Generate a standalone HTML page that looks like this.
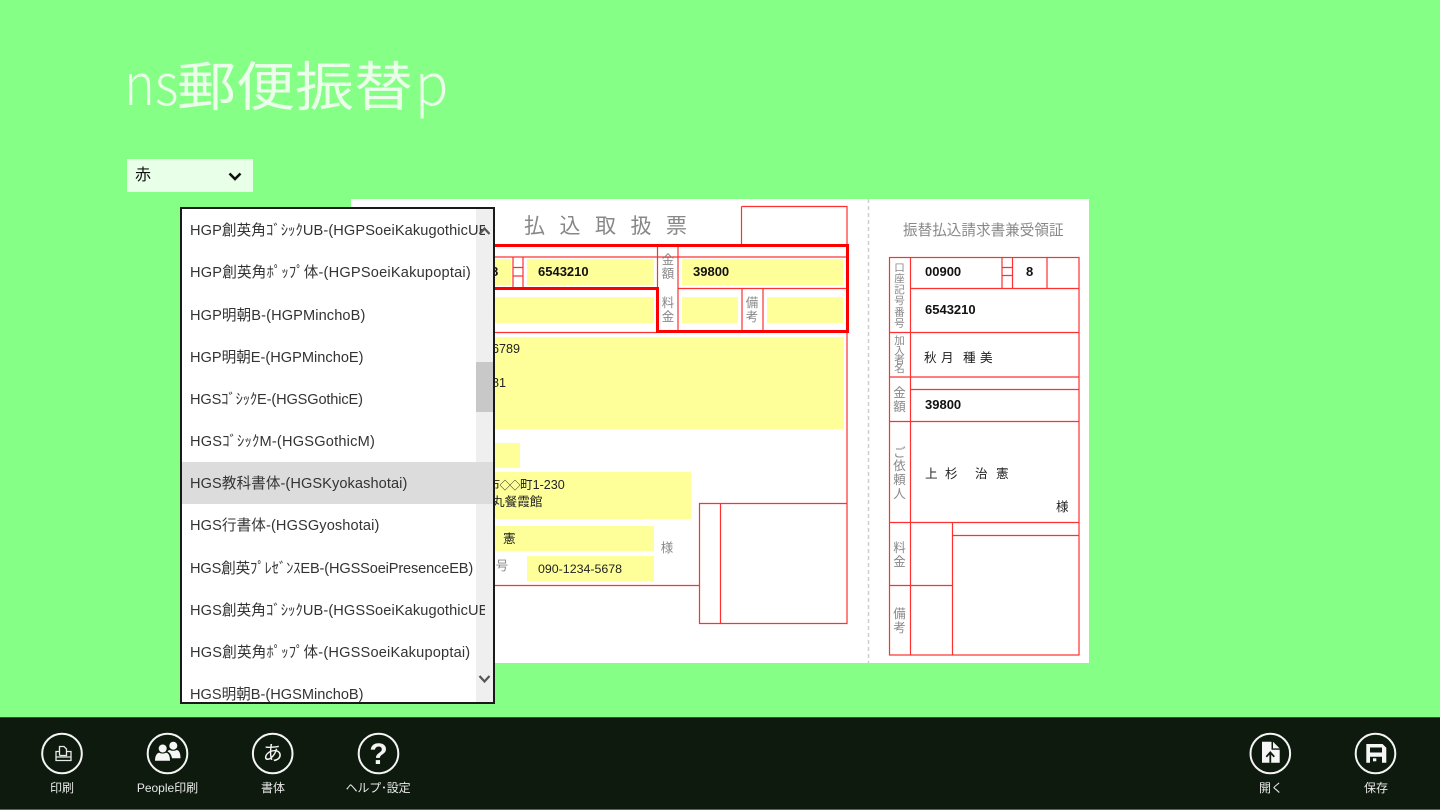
<!DOCTYPE html>
<html lang="ja"><head><meta charset="utf-8"><title>ns郵便振替p</title>
<style>
*{box-sizing:border-box;margin:0;padding:0}
html,body{width:1440px;height:810px;overflow:hidden;background:#85ff85;font-family:"Liberation Sans","Noto Sans CJK JP",sans-serif}
.abs{position:absolute}
#title{left:0;top:0;width:600px;height:140px;color:#eafeea;white-space:nowrap;font-family:"Noto Sans CJK JP",sans-serif}
#title span{position:absolute;line-height:80px}
#sel{left:127px;top:159px;width:126px;height:33px;background:#e8ffe8;color:#111;font-size:16px;line-height:33px;padding-left:8px}
#paper{left:351px;top:199px;width:738px;height:464px;background:#fff}
#drop{left:180px;top:207px;width:315px;height:497px;background:#fff;border:2px solid #1a1a1a;overflow:hidden}
#drop .sb{position:absolute;left:294px;top:0;width:17px;height:493px;background:#efefef}
#drop .th{position:absolute;left:294px;top:153px;width:17px;height:50px;background:#c8c8c8}
#drop .sel{position:absolute;left:0;top:253px;width:311px;height:42px;background:#dcdcdc}
#drop .it{position:absolute;left:8px;width:295px;overflow:hidden;height:24px;line-height:24px;font-size:14.6px;color:#333;white-space:nowrap}
#bar{left:0;top:717px;width:1440px;height:93px;background:#0e1a0e;border-top:1px solid #2e5a2e;border-bottom:1px solid #5a625a}
.lab{position:absolute;top:779px;width:120px;text-align:center;color:#e8e8e8;font-size:12px;line-height:18px;white-space:nowrap}
</style></head><body>
<div class="abs" id="title">
<span style="left:124px;top:40px;font-size:58px;font-weight:300;transform:scaleX(.9);transform-origin:0 50%">ns</span>
<span style="left:177px;top:43px;font-size:59px;font-weight:400;transform:scaleY(.9);transform-origin:0 50%">郵便振替</span>
<span style="left:415px;top:40px;font-size:58px;font-weight:300;transform:scaleX(.95);transform-origin:0 50%">p</span>
</div>
<div class="abs" id="sel">赤<svg style="position:absolute;left:101px;top:13px" width="14" height="10" viewBox="0 0 14 10"><path d="M1.500 1.500 7 7l5.500-5.500" fill="none" stroke="#111" stroke-width="2.600"/></svg></div>
<div class="abs" id="paper"></div>

<svg class="abs" style="left:0;top:0" width="1440" height="810" viewBox="0 0 1440 810" font-family="'Liberation Sans','Noto Sans CJK JP',sans-serif">
<g fill="#ffff99">
<rect x="490" y="259" width="21" height="26"/><rect x="527" y="259" width="127" height="26"/><rect x="682" y="259" width="161" height="26"/>
<rect x="490" y="297" width="164" height="26"/><rect x="682" y="297" width="56" height="26"/><rect x="767" y="297" width="76" height="26"/>
<rect x="490" y="337" width="354" height="92"/><rect x="490" y="443" width="30" height="25"/><rect x="490" y="472" width="201" height="47"/>
<rect x="490" y="526" width="164" height="25"/><rect x="527" y="556" width="127" height="25"/>
</g>
<g fill="none" stroke="#ff3030" stroke-width="1.200">
<path d="M741.500 206.500H847V244M741.500 206.500V245"/>
<path d="M490 257H846M490 332.500H657M847 332V503M513 257V288M523 257V288M513 267.500H523M513 276H523M678 245V332M657.500 245V288M742 289V331M763 289V331M678 288.500H846"/>
<path d="M490 585.500H699M699.500 503.500H847V623.500H699.500ZM720.500 503.500V623.500"/>
<rect x="889.500" y="257.500" width="189.500" height="397.500"/>
<path d="M910.500 257.500V655M910.500 288.500H1079M889.500 332.500H1079M889.500 377H1079M910.500 389.500H1079M889.500 421.500H1079M1002 257.500V288.500M1012.500 257.500V288.500M1002 267.500H1012.500M1002 275.500H1012.500M1047 257.500V288.500M889.500 522.500H1079M952.500 522.500V655M952.500 535.500H1079M889.500 585.500H952.500"/>
</g>
<g fill="none" stroke="#f00" stroke-width="3"><path d="M490 245.500H847.500V331.500H657.500V288.500H490"/></g>
<path d="M868.500 199V663" stroke="#cfcfcf" stroke-width="1.500" stroke-dasharray="4 3"/>

<g fill="#888">
<text x="524" y="233" font-size="21" letter-spacing="14.500">払込取扱票</text>
<text x="903" y="235" font-size="14.600">振替払込請求書兼受領証</text>
<g font-size="12.500" text-anchor="middle">
<text x="668" y="264">金</text><text x="668" y="278">額</text>
<text x="668" y="307">料</text><text x="668" y="321">金</text>
<text x="752" y="307">備</text><text x="752" y="321">考</text>
<text x="667" y="552">様</text><text x="502" y="570">号</text>
<text x="899.500" y="397">金</text><text x="899.500" y="411">額</text>
<text x="899.500" y="457">ご</text><text x="899.500" y="470">依</text><text x="899.500" y="484">頼</text><text x="899.500" y="498">人</text>
<text x="899.500" y="552">料</text><text x="899.500" y="566">金</text>
<text x="899.500" y="618">備</text><text x="899.500" y="632">考</text>
</g>
<g font-size="10.500" text-anchor="middle">
<text x="899.500" y="271">口</text><text x="899.500" y="282">座</text><text x="899.500" y="293">記</text><text x="899.500" y="304">号</text><text x="899.500" y="315.500">番</text><text x="899.500" y="326.500">号</text>
<text x="899.500" y="344">加</text><text x="899.500" y="354">入</text><text x="899.500" y="363">者</text><text x="899.500" y="372">名</text>
</g>
</g>
<g fill="#111" font-size="13" font-weight="bold">
<text x="491" y="276">8</text><text x="538" y="276">6543210</text><text x="693" y="276">39800</text>
<text x="925" y="276">00900</text><text x="1026" y="276">8</text><text x="925" y="314">6543210</text><text x="925" y="409">39800</text>
</g>
<g fill="#222" font-size="12.600">
<text x="457" y="353">123456789</text><text x="492" y="387">81</text>
<text x="487.500" y="489">市</text><text x="499.500" y="489" font-size="11">◇</text><text x="509.500" y="489" font-size="11">◇</text><text x="520" y="489">町1-230</text><text x="492" y="506">丸餐霞館</text>
<text x="503" y="543">憲</text><text x="538" y="573" font-size="12.400">090-1234-5678</text>
<text x="924" y="362">秋</text><text x="941" y="362">月</text><text x="963" y="362">種</text><text x="980" y="362">美</text>
<text x="925" y="478">上</text><text x="945" y="478">杉</text><text x="975" y="478">治</text><text x="996" y="478">憲</text>
<text x="1056" y="511">様</text>
</g>
</svg>

<div class="abs" id="drop">
<div class="sb"></div><div class="th"></div><div class="sel"></div>
<div class="it" style="top:10px;letter-spacing:.1px">HGP創英角ｺﾞｼｯｸUB-(HGPSoeiKakugothicUB)</div>
<div class="it" style="top:52px;letter-spacing:.2px">HGP創英角ﾎﾟｯﾌﾟ体-(HGPSoeiKakupoptai)</div>
<div class="it" style="top:95px;letter-spacing:.1px">HGP明朝B-(HGPMinchoB)</div>
<div class="it" style="top:137px">HGP明朝E-(HGPMinchoE)</div>
<div class="it" style="top:179px;letter-spacing:-.15px">HGSｺﾞｼｯｸE-(HGSGothicE)</div>
<div class="it" style="top:221px;letter-spacing:.2px">HGSｺﾞｼｯｸM-(HGSGothicM)</div>
<div class="it" style="top:263px;letter-spacing:.07px">HGS教科書体-(HGSKyokashotai)</div>
<div class="it" style="top:305px;letter-spacing:.1px">HGS行書体-(HGSGyoshotai)</div>
<div class="it" style="top:348px;letter-spacing:-.15px">HGS創英ﾌﾟﾚｾﾞﾝｽEB-(HGSSoeiPresenceEB)</div>
<div class="it" style="top:390px;letter-spacing:.1px">HGS創英角ｺﾞｼｯｸUB-(HGSSoeiKakugothicUB)</div>
<div class="it" style="top:432px;letter-spacing:.18px">HGS創英角ﾎﾟｯﾌﾟ体-(HGSSoeiKakupoptai)</div>
<div class="it" style="top:474px">HGS明朝B-(HGSMinchoB)</div>
<svg style="position:absolute;left:294px;top:0" width="17" height="493" viewBox="0 0 17 493"><path d="M3.500 25 8.500 19.500 13.500 25M3.500 467 8.500 472.500 13.500 467" fill="none" stroke="#555" stroke-width="2.200"/></svg>
</div>

<div class="abs" id="bar"></div>
<svg class="abs" style="left:0;top:0;pointer-events:none" width="1440" height="810" viewBox="0 0 1440 810" font-family="'Liberation Sans','Noto Sans CJK JP',sans-serif">
<g fill="none" stroke="#f4f4f4" stroke-width="2">
<circle cx="62" cy="753.500" r="19.800"/><circle cx="167.500" cy="753.500" r="19.800"/><circle cx="272.700" cy="753.500" r="19.800"/><circle cx="378.500" cy="753.500" r="19.800"/><circle cx="1270.300" cy="753.500" r="19.800"/><circle cx="1375.500" cy="753.500" r="19.800"/>
</g>
<path d="M59 751.500H56V760.500H71V751.500H67M56 757H71M59.500 755.500V746.500H64L66.500 749V755.500H59.500" fill="none" stroke="#e8e8e8" stroke-width="1.300"/>
<g fill="#f6f6f6">
<circle cx="162.700" cy="748.500" r="4"/><path d="M155 760.700c0-5 2-8 4.500-8 1.500 1 4.500 1 6.300 0 2.700 0 4.200 3 4.200 8z"/>
<circle cx="173.300" cy="745.700" r="4"/><path d="M167.500 751.500c.5-.7 1-1.500 2.500-1.500 1.500 1 4.500 1 6.500 0 2.500 0 4 3 4 8.300h-8.500c-.5-3-2-5.800-4.500-6.800z"/>
<path d="M1262 741.700H1271.500V749.800H1279.700V762.700H1262ZM1273 741.700 1279.700 748.400H1273Z"/>
<path d="M1366.300 744H1382.500L1386.300 747.800V762.700H1366.300ZM1370 747.500V752.500H1382V747.500ZM1370 756.700V762.700H1382V756.700Z" fill-rule="evenodd"/>
<rect x="1373" y="758.300" width="3.300" height="3"/>
</g>
<path d="M1270.300 762.700V753M1266.300 756.800 1270.300 752.300 1274.300 756.800" fill="none" stroke="#0e1a0e" stroke-width="1.800"/>
<text x="272.700" y="760" font-size="20" fill="#f4f4f4" text-anchor="middle">あ</text>
<text x="378.500" y="764" font-size="30" font-weight="bold" fill="#f4f4f4" text-anchor="middle">?</text>
</svg>
<div class="lab" style="left:2px">印刷</div>
<div class="lab" style="left:107.500px">People印刷</div>
<div class="lab" style="left:213px">書体</div>
<div class="lab" style="left:318px;letter-spacing:-.2px">ヘルプ･設定</div>
<div class="lab" style="left:1211px">開く</div>
<div class="lab" style="left:1316px">保存</div>
</body></html>
